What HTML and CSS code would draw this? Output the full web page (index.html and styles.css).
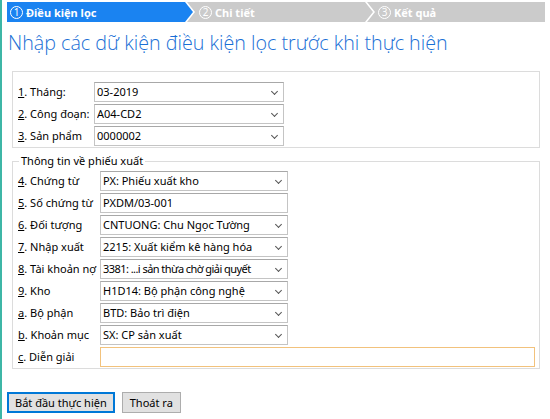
FILE: index.html
```html
<!DOCTYPE html>
<html lang="vi">
<head>
<meta charset="utf-8">
<title>Điều kiện lọc</title>
<link rel="stylesheet" href="styles.css">
</head>
<body>
<div class="page">
  <div class="wizard">
    <div class="step step1 active"><span class="num">1</span><span class="stxt">Điều kiện lọc</span></div>
    <div class="step step2"><span class="num">2</span><span class="stxt">Chi tiết</span></div>
    <div class="step step3"><span class="num">3</span><span class="stxt">Kết quả</span></div>
  </div>
  <h1 class="title">Nhập các dữ kiện điều kiện lọc trước khi thực hiện</h1>

  <div class="box box1">
    <div class="row"><label><u>1</u>. Tháng:</label><div class="field combo"><span class="val">03-2019</span><i class="chev"></i></div></div>
    <div class="row"><label><u>2</u>. Công đoạn:</label><div class="field combo"><span class="val">A04-CD2</span><i class="chev"></i></div></div>
    <div class="row"><label><u>3</u>. Sản phẩm</label><div class="field combo"><span class="val">0000002</span><i class="chev"></i></div></div>
  </div>

  <fieldset class="box box2">
    <legend>Thông tin về phiếu xuất</legend>
    <div class="row"><label><u>4</u>. Chứng từ</label><div class="field combo"><span class="val">PX: Phiếu xuất kho</span><i class="chev"></i></div></div>
    <div class="row"><label><u>5</u>. Số chứng từ</label><div class="field"><span class="val">PXDM/03-001</span></div></div>
    <div class="row"><label><u>6</u>. Đối tượng</label><div class="field combo"><span class="val">CNTUONG: Chu Ngọc Tường</span><i class="chev"></i></div></div>
    <div class="row"><label><u>7</u>. Nhập xuất</label><div class="field combo"><span class="val">2215: Xuất kiểm kê hàng hóa</span><i class="chev"></i></div></div>
    <div class="row"><label><u>8</u>. Tài khoản nợ</label><div class="field combo"><span class="val tight">3381: ...i sản thừa chờ giải quyết</span><i class="chev"></i></div></div>
    <div class="row"><label><u>9</u>. Kho</label><div class="field combo"><span class="val">H1D14: Bộ phận công nghệ</span><i class="chev"></i></div></div>
    <div class="row"><label><u>a</u>. Bộ phận</label><div class="field combo"><span class="val">BTD: Bảo trì điện</span><i class="chev"></i></div></div>
    <div class="row"><label><u>b</u>. Khoản mục</label><div class="field combo"><span class="val">SX: CP sản xuất</span><i class="chev"></i></div></div>
    <div class="row wide"><label><u>c</u>. Diễn giải</label><div class="field focus"></div></div>
  </fieldset>

  <div class="buttons">
    <button class="btn primary">Bắt đầu thực hiện</button>
    <button class="btn">Thoát ra</button>
  </div>
</div>
</body>
</html>
```

FILE: styles.css
```css
html, body {
  margin: 0;
  padding: 0;
  background: #ffffff;
}
body {
  font-family: "Noto Sans", "Open Sans", sans-serif;
  font-size: 11px;
  color: #000;
}
.page {
  width: 548px;
  height: 419px;
  border-left: 2px solid #3db6a6;
  box-sizing: border-box;
  padding-top: 2px;
}
.wizard {
  display: flex;
  height: 20px;
  margin-left: 5px;
  width: 538px;
}
.step {
  height: 20px;
  background: #cbcbcb;
  color: #fff;
  font-weight: bold;
  font-size: 11px;
  display: flex;
  align-items: center;
  box-sizing: border-box;
}
.step.active { background: #1a83f1; }
.step1 {
  width: 186px;
  padding-left: 3px;
  clip-path: polygon(0 0, calc(100% - 8px) 0, 100% 50%, calc(100% - 8px) 100%, 0 100%);
}
.step2 {
  width: 186px;
  margin-left: -6px;
  padding-left: 12px;
  clip-path: polygon(0 0, calc(100% - 8px) 0, 100% 50%, calc(100% - 8px) 100%, 0 100%, 8px 50%);
}
.step3 {
  flex: 1;
  margin-left: -6px;
  padding-left: 11px;
  clip-path: polygon(0 0, 100% 0, 100% 100%, 0 100%, 8px 50%);
}
.num {
  width: 11px;
  height: 11px;
  border: 1.5px solid #fff;
  border-radius: 50%;
  display: inline-flex;
  align-items: center;
  justify-content: center;
  font-size: 10px;
  font-weight: normal;
  line-height: 1;
  margin-right: 3px;
}
.title {
  margin: 8px 0 0 6px;
  font-family: "Open Sans", "Noto Sans", sans-serif;
  font-weight: 300;
  font-size: 19.7px;
  line-height: 26px;
  color: #1a6fd6;
}
.box {
  margin: 0 0 0 10px;
  width: 528px;
  border: 1px solid #dcdcdc;
  box-sizing: border-box;
}
.box1 {
  margin-top: 15px;
  padding: 10px 0 1px 5px;
}
.box2 {
  margin-top: 5px;
  padding: 0 3px 1px 5px;
  min-inline-size: 0;
}
.box2 legend {
  padding: 0 2px;
  margin-left: 1px;
  line-height: 16px;
}
.box2 .row:first-of-type { margin-top: 2px; }
.row {
  display: grid;
  grid-template-columns: 76px 190px;
  align-items: center;
  height: 20px;
  margin-bottom: 2px;
}
.row:last-child { margin-bottom: 0; }
.box2 .row { grid-template-columns: 82px 188px; }
.box2 .row.wide { grid-template-columns: 82px 435px; }
label {
  white-space: nowrap;
  line-height: 20px;
}
.field {
  height: 20px;
  box-sizing: border-box;
  border: 1px solid #c4c4c4;
  border-top-color: #a8a8a8;
  padding: 0 0 0 2px;
  line-height: 18px;
  position: relative;
  white-space: nowrap;
  display: flex;
}
.val {
  flex: 1;
  min-width: 0;
  overflow: hidden;
}
.val.tight { letter-spacing: -0.55px; }
.field.focus {
  border-color: #f2c27c;
}
.chev {
  position: absolute;
  right: 6px;
  top: 6px;
  width: 4px;
  height: 4px;
  border-right: 1px solid #555;
  border-bottom: 1px solid #555;
  transform: rotate(45deg);
}
.combo { padding-right: 18px; }
.buttons {
  display: flex;
  gap: 7px;
  margin: 23px 0 0 5px;
}
.btn {
  font-family: "Noto Sans", "Open Sans", sans-serif;
  font-size: 11px;
  height: 21px;
  padding: 0 7px;
  background: #e1e1e1;
  border: 1px solid #adadad;
  color: #000;
  line-height: 17px;
}
.btn.primary {
  border: 2px solid #0078d7;
  padding: 0 6px;
}
```
